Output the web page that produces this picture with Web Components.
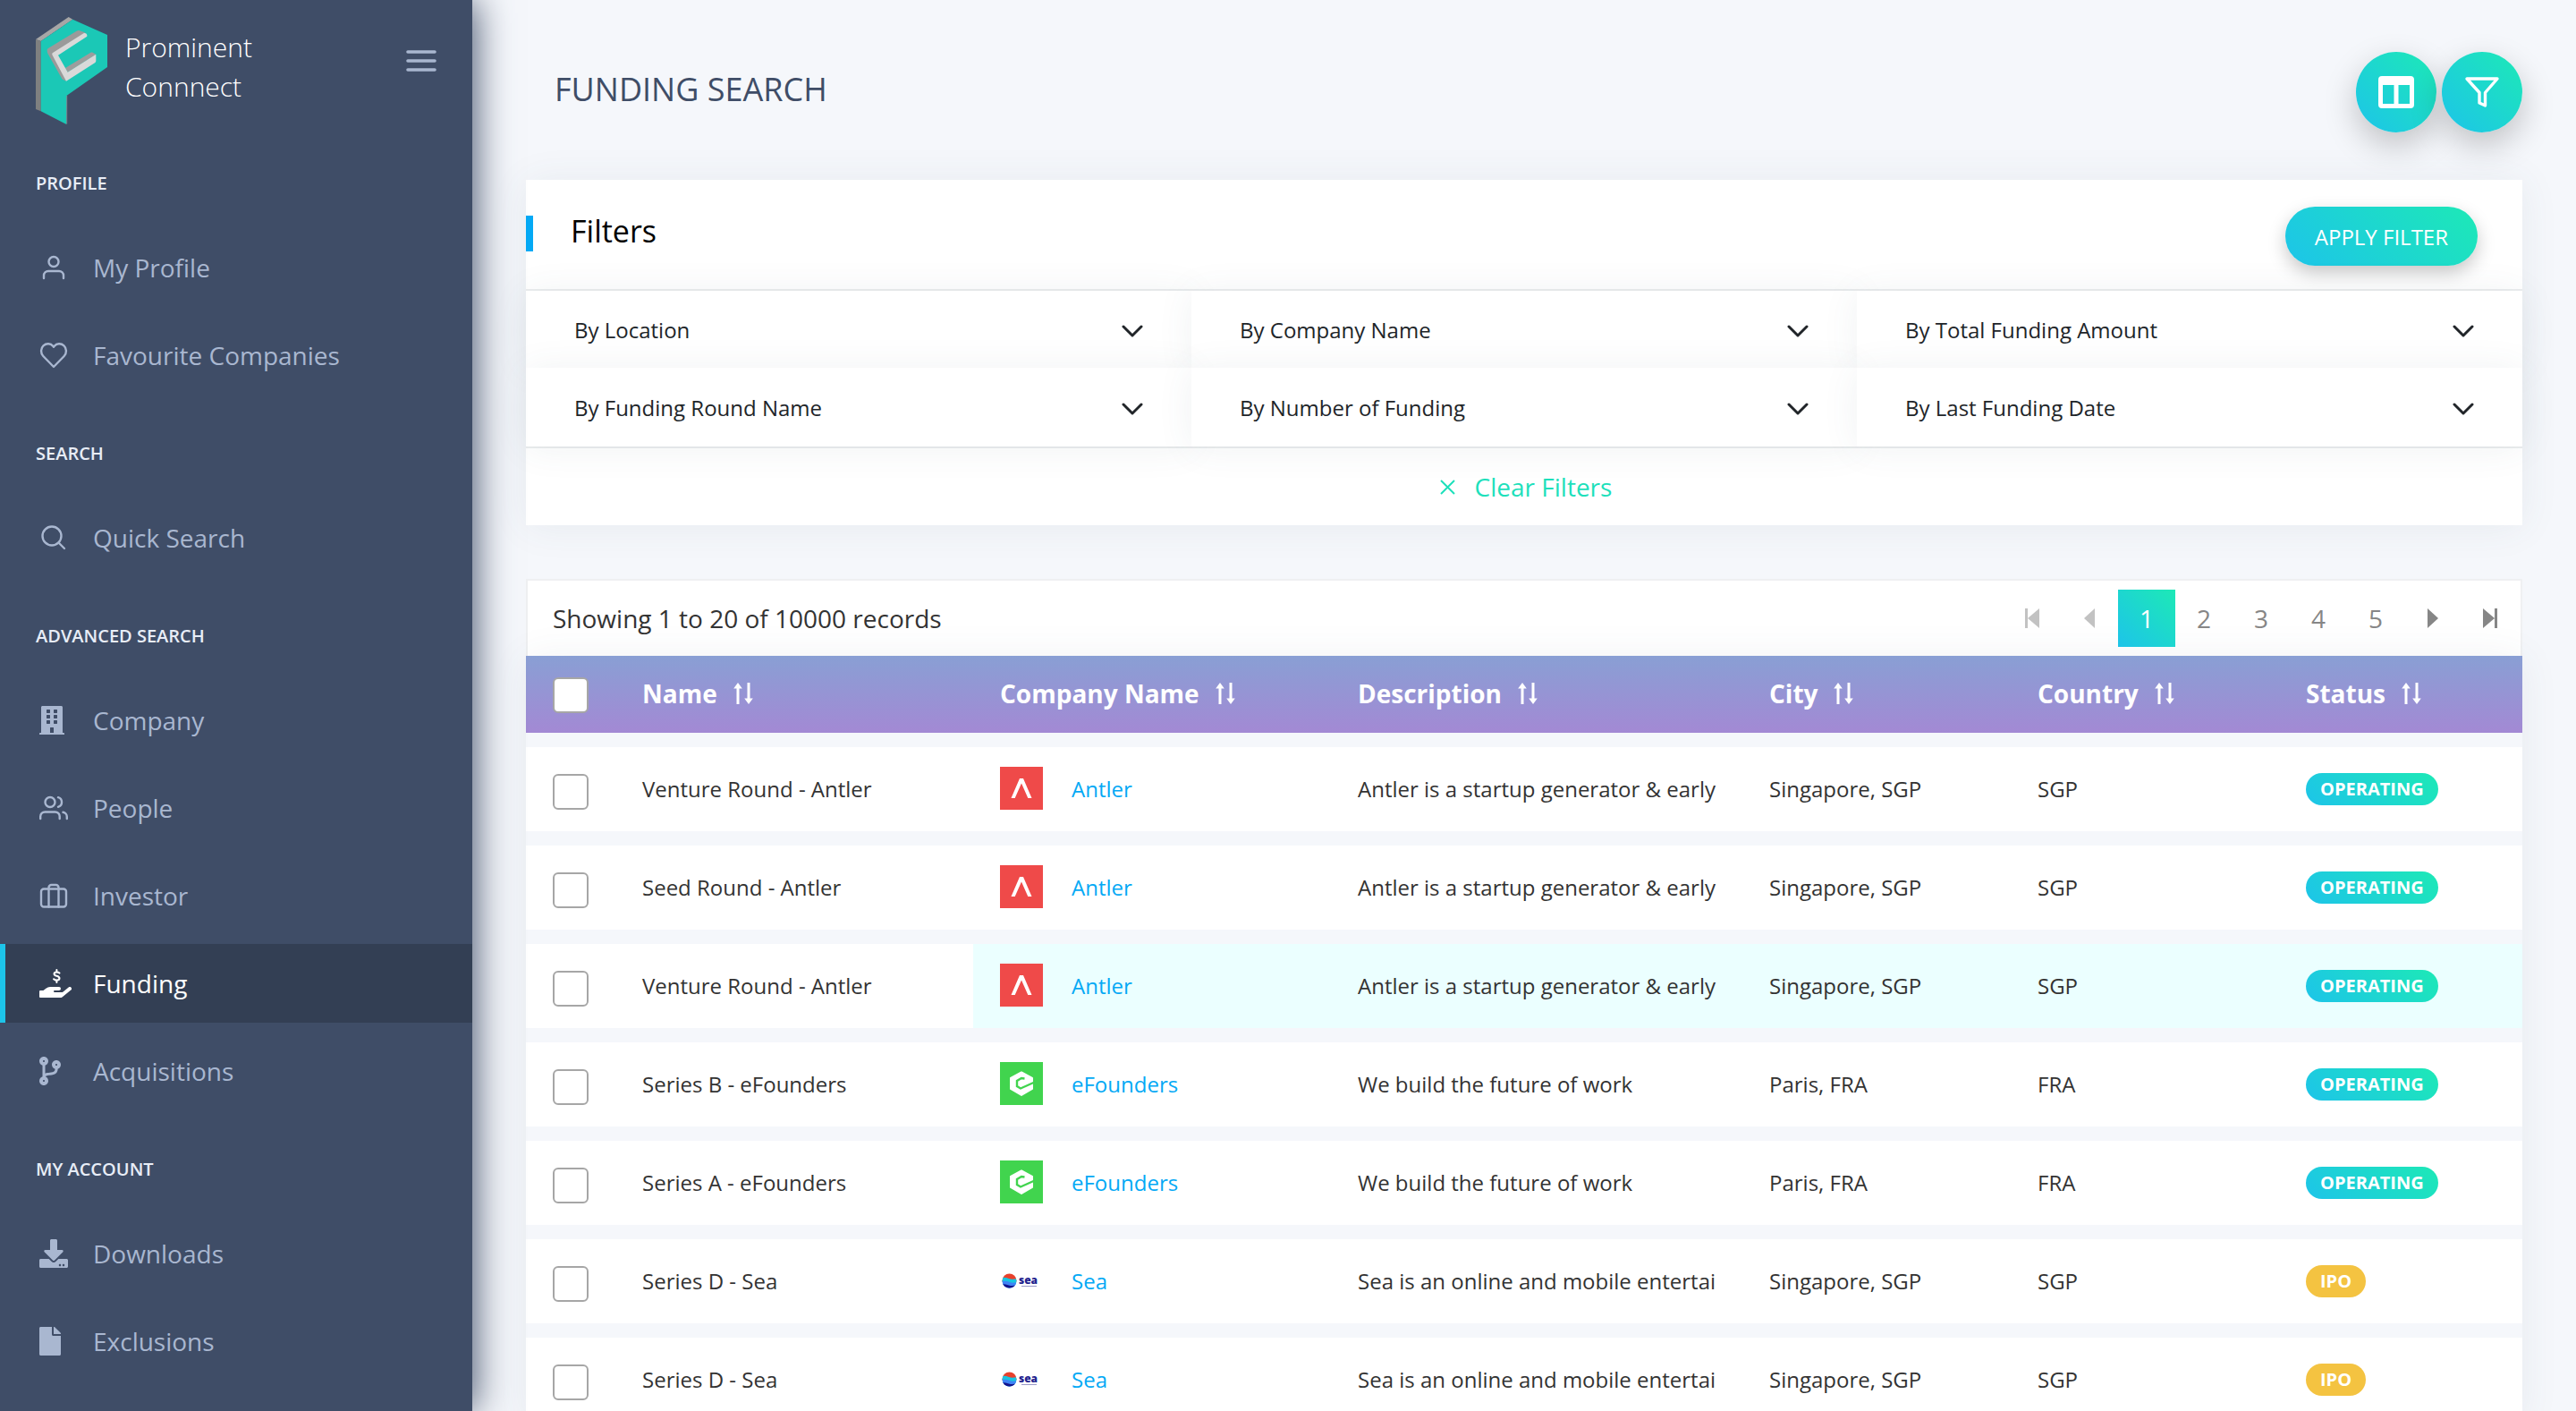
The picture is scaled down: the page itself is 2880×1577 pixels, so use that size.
<!DOCTYPE html>
<html lang="en">
<head>
<meta charset="utf-8">
<title>Prominent Connnect - Funding Search</title>
<style>
  html { font-family: "Open Sans", "Noto Sans", sans-serif; color: #333; --grad: linear-gradient(-135deg, #1de9b6 0%, #1dc4e9 100%); --link: #04a9f5; --page: #f5f7fb; }
  body { margin: 0; background: #f5f7fb; }
</style>
</head>
<body>
<funding-app></funding-app>
<script>
const define = (name, html, setup) => {
  const tpl = document.createElement('template');
  tpl.innerHTML = '<style>*,*::before{box-sizing:border-box}a{text-decoration:none;color:inherit}button{font:inherit;border:0;background:none;padding:0;margin:0;cursor:pointer}svg{display:block}</style>' + html;
  customElements.define(name, class extends HTMLElement {
    constructor() {
      super();
      this.attachShadow({ mode: 'open' }).append(tpl.content.cloneNode(true));
    }
    connectedCallback() { if (setup) setup.call(this, this.shadowRoot); }
  });
};

/* line: stroked outline icons, fill: solid icons */
const ICONS = {
  user: ['0 0 36 32', 'line', '<circle cx="16" cy="9.5" r="5.5"/><path d="M5 28v-3a5 5 0 0 1 5-5h12a5 5 0 0 1 5 5v3"/>'],
  heart: ['0 0 36 32', 'line', '<path d="M16 29 4.3 17C1.2 13.7 1.3 8.4 4.500 5.400 7.700 2.400 12.600 2.600 15.200 5.800L16 6.800l.8-1C19.400 2.600 24.300 2.400 27.500 5.400c3.200 3 3.300 8.300.2 11.600z"/>'],
  search: ['0 0 36 32', 'line', '<circle cx="14" cy="14" r="10.500"/><path d="m21.500 21.500 6.500 6.500"/>'],
  building: ['0 0 36 32', 'fill', '<path fill-rule="evenodd" d="M3.500 0h21c.8 0 1.500.7 1.500 1.500V30h1.300c.4 0 .7.3.7.7V32H0v-1.300c0-.4.3-.7.7-.7H2V1.500C2 .7 2.700 0 3.500 0zM8 4.500v3c0 .3.200.500.500.500h3c.3 0 .5-.2.500-.5v-3c0-.3-.2-.5-.5-.5h-3c-.3 0-.5.2-.5.5zm8 0v3c0 .3.2.500.500.500h3c.3 0 .5-.2.500-.5v-3c0-.3-.2-.5-.5-.5h-3c-.3 0-.5.2-.5.5zm-8 6v3c0 .3.2.500.500.500h3c.3 0 .5-.2.500-.5v-3c0-.3-.2-.5-.5-.5h-3c-.3 0-.5.2-.5.5zm8 0v3c0 .3.200.500.500.500h3c.3 0 .5-.2.500-.5v-3c0-.3-.2-.5-.5-.5h-3c-.3 0-.5.2-.5.5zm-8 6v3c0 .3.200.500.500.500h3c.3 0 .5-.2.500-.5v-3c0-.3-.2-.5-.5-.5h-3c-.3 0-.5.2-.5.5zm8 0v3c0 .3.200.500.500.500h3c.3 0 .5-.2.500-.5v-3c0-.3-.2-.5-.5-.5h-3c-.3 0-.5.2-.5.5zM12 24.500V30h4v-5.500c0-.3-.2-.5-.5-.5h-3c-.3 0-.5.2-.5.500z"/>'],
  users: ['0 0 36 32', 'line', '<circle cx="12" cy="9.500" r="5.500"/><path d="M1.200 28v-2.500a5 5 0 0 1 5-5h11.500a5 5 0 0 1 5 5V28M21 4.200a5.500 5.500 0 0 1 0 10.600M26.500 20.800a5 5 0 0 1 4.300 5V28"/>'],
  suitcase: ['0 0 36 32', 'line', '<rect x="2" y="8.500" width="28" height="20" rx="3"/><path d="M10.500 28.500V7a3 3 0 0 1 3-3h5a3 3 0 0 1 3 3v21.500"/>'],
  funding: ['0 0 576 512', 'fill', '<path d="M565.3 328.1c-11.8-10.7-30.2-10-42.6 0L430.3 402a63.6 63.6 0 0 1-40 14H272a16 16 0 0 1 0-32h78.300c15.900 0 30.700-10.900 33.200-26.600a31 31 0 0 0 .5-5.400A32 32 0 0 0 352 320H192a117.700 117.700 0 0 0-74.100 26.300L71.400 384H16a16 16 0 0 0-16 16v96a16 16 0 0 0 16 16h356.800a64 64 0 0 0 40-14L564 377a32 32 0 0 0 1.300-48.900z"/><path fill="none" stroke="currentColor" stroke-width="34" stroke-linecap="round" d="M359 73c-14-14-30-18-49-18-28 0-45 13-45 33 0 25 25 31 45 36 26 7 49 14 49 41 0 23-19 36-48 36-22 0-38-6-53-20"/><path fill="none" stroke="currentColor" stroke-width="32" stroke-linecap="round" d="M310 16v34m0 156v34"/>'],
  branch: ['0 0 576 512', 'fill', '<path d="M384 144c0-44.200-35.800-80-80-80s-80 35.800-80 80c0 36.400 24.300 67.100 57.500 76.800-.6 16.100-4.200 28.500-11 36.900-15.400 19.200-49.300 22.400-85.200 25.700-28.200 2.600-57.400 5.400-81.300 16.900v-144c32.500-10.200 56-40.500 56-76.300 0-44.200-35.800-80-80-80S0 35.800 0 80c0 35.800 23.500 66.100 56 76.300v199.300C23.500 365.900 0 396.200 0 432c0 44.200 35.800 80 80 80s80-35.800 80-80c0-34-21.200-63.100-51.200-74.600 3.100-5.200 7.800-9.800 14.900-13.400 16.200-8.200 40.400-10.400 66.100-12.800 42.200-3.900 90-8.400 118.200-43.400 14-17.400 21.100-39.800 21.600-67.900 31.600-10.800 54.400-40.700 54.400-75.900zM80 64c8.800 0 16 7.200 16 16s-7.200 16-16 16-16-7.200-16-16 7.200-16 16-16zm0 384c-8.800 0-16-7.200-16-16s7.200-16 16-16 16 7.200 16 16-7.200 16-16 16zm224-320c8.800 0 16 7.200 16 16s-7.200 16-16 16-16-7.200-16-16 7.200-16 16-16z"/>'],
  download: ['0 0 576 512', 'fill', '<path d="M216 0h80c13.300 0 24 10.700 24 24v168h87.700c17.800 0 26.700 21.500 14.100 34.100L269.700 378.300c-7.500 7.500-19.800 7.500-27.300 0L90.100 226.100c-12.600-12.600-3.700-34.100 14.100-34.100H192V24c0-13.300 10.700-24 24-24zm296 376v112c0 13.300-10.700 24-24 24H24c-13.300 0-24-10.700-24-24V376c0-13.300 10.700-24 24-24h146.700l49 49c20.100 20.100 52.500 20.100 72.600 0l49-49H488c13.300 0 24 10.700 24 24zm-124 88c0-11-9-20-20-20s-20 9-20 20 9 20 20 20 20-9 20-20zm64 0c0-11-9-20-20-20s-20 9-20 20 9 20 20 20 20-9 20-20z"/>'],
  file: ['0 0 576 512', 'fill', '<path d="M224 136V0H24C10.700 0 0 10.700 0 24v464c0 13.300 10.700 24 24 24h336c13.300 0 24-10.700 24-24V160H248c-13.200 0-24-10.800-24-24zm160-14.100v6.100H256V0h6.100c6.400 0 12.500 2.500 17 7l97.900 98c4.500 4.500 7 10.600 7 16.900z"/>']
};

define('nav-icon', `<style>:host{display:block;width:36px;height:32px}svg{width:36px;height:32px}.line{fill:none;stroke:currentColor;stroke-width:2.400;stroke-linecap:round;stroke-linejoin:round}.fill{fill:currentColor}</style><span></span>`,
  function (r) {
    const [box, kind, body] = ICONS[this.getAttribute('name')];
    r.querySelector('span').innerHTML = `<svg viewBox="${box}" class="${kind}" aria-hidden="true">${body}</svg>`;
  });

define('brand-logo', `<style>:host{display:block}</style>
<svg width="80" height="120" viewBox="0 0 80 120" aria-hidden="true">
<path fill="#a6a6a6" d="M0 25 36.700 0l4.600 2.700L5.700 27z"/><path fill="#7f8080" d="M0 25l5.700 2v78.300L0 103z"/>
<path fill="#1bc8b6" d="M5.700 27 41.300 2.700 80 20v36L34.700 87.700 34.300 120 5.700 105.300z"/><path fill="none" stroke="#8b8f92" stroke-width=".8" d="M34.700 88v31.500"/>
<path fill="#9a9a9a" d="M12.700 37c0-1 .5-1.700 1.500-2.300L46 15.500c1-.6 2-.7 3-.3l6.500 2.200L20 41l14 30.700-4.500-2.200L13.500 41c-.5-1-.8-2.500-.8-4z"/>
<path fill="#9d9d9d" d="m33 57 28-17c1-.6 2-.5 3-.1l3.300 1.800-31.600 20z"/>
<path fill="#d9d9d9" d="m19 40 34-21.500c2.500-1.400 5 .5 4.300 3.200L25 42.700l10.700 19 31.600-20v7c0 1-.5 2-1.300 2.500L34 71.700 18.500 42.500c-.4-1-.3-2 .5-2.500z"/>
</svg>`);

define('nav-item', `<style>
:host{display:block;margin-bottom:10px;color:#a9b7d0}
a{display:flex;align-items:center;height:88px;padding-left:38px;gap:24px;font-size:28px;border-left:6px solid transparent}
:host([active]){color:#fff}:host([active]) a{background:#333f54;border-left-color:#1dc4e9}
</style><a href="#"><slot></slot></a>`,
  function (r) {
    const link = r.querySelector('a');
    link.insertAdjacentHTML('afterbegin', `<nav-icon name="${this.getAttribute('icon')}"></nav-icon>`);
    if (this.hasAttribute('active')) link.setAttribute('aria-current', 'page');
  });

define('nav-group', `<style>
:host{display:block;margin-bottom:-10px}
h2{margin:0;height:116px;padding:52px 40px 0;font-size:20px;line-height:28px;font-weight:600;color:#e8edf7;text-transform:uppercase}
</style><h2></h2><slot></slot>`,
  function (r) { r.querySelector('h2').textContent = this.getAttribute('label'); });

define('side-bar', `<style>
:host{display:block;background:#3f4d67;box-shadow:2px 0 40px 0 #3f4d67}
header{display:flex;align-items:flex-start;height:139px;padding:19px 38px 0 40px}
.brand{flex:1;display:flex;gap:20px;color:#fff;font-size:30px;line-height:44px;font-weight:300}
.brand span{width:180px;padding-top:12px}
.menu{padding:36px 0 0}
</style>
<header><a class="brand" href="#"><brand-logo></brand-logo><span>Prominent Connnect</span></a>
<button class="menu" aria-label="Toggle menu"><svg width="38" height="28" viewBox="0 0 38 28" fill="none" stroke="#a9b7d0" stroke-width="3.600" stroke-linecap="round"><path d="M4 3h30M4 13h30M4 23h30"/></svg></button></header>
<nav>
<nav-group label="Profile"><nav-item icon="user">My Profile</nav-item><nav-item icon="heart">Favourite Companies</nav-item></nav-group>
<nav-group label="Search"><nav-item icon="search">Quick Search</nav-item></nav-group>
<nav-group label="Advanced Search"><nav-item icon="building">Company</nav-item><nav-item icon="users">People</nav-item><nav-item icon="suitcase">Investor</nav-item><nav-item icon="funding" active>Funding</nav-item><nav-item icon="branch">Acquisitions</nav-item></nav-group>
<nav-group label="My Account"><nav-item icon="download">Downloads</nav-item><nav-item icon="file">Exclusions</nav-item></nav-group>
</nav>`);

define('page-header', `<style>
:host{display:flex;justify-content:space-between;align-items:flex-start;height:201px;padding-top:58px}
h1{margin:0;padding-left:32px;font-size:36px;line-height:84px;font-weight:400;color:#3f4d67;text-transform:uppercase}
div{display:flex;gap:6px}
button{width:90px;height:90px;border-radius:50%;background:var(--grad);box-shadow:0 14px 36px rgba(0,0,0,.22);display:flex;align-items:center;justify-content:center}
</style>
<h1><slot></slot></h1>
<div><button aria-label="Columns"><svg width="40" height="36" viewBox="0 0 40 36" fill="#fff"><path fill-rule="evenodd" d="M4 0h32a4 4 0 0 1 4 4v28a4 4 0 0 1-4 4H4a4 4 0 0 1-4-4V4a4 4 0 0 1 4-4zm1 10v21h12.500V10zm17.500 0v21H35V10z"/></svg></button>
<button aria-label="Filter"><svg width="40" height="36" viewBox="0 0 40 36" fill="none" stroke="#fff" stroke-width="3.400" stroke-linejoin="round"><path d="M3 3h34L23.500 18.500V33l-6.500-3V18.500z"/></svg></button></div>`);

define('filter-item', `<style>
:host{display:block;background:#fff;box-shadow:0 2px 40px 0 rgba(69,90,100,.08)}
button{display:flex;align-items:center;justify-content:space-between;width:100%;height:100%;padding:0 54px;font-size:24px;color:#212529;text-align:left}
svg{margin-top:4px}
</style><button aria-expanded="false"><slot></slot><svg width="24" height="14" viewBox="0 0 24 14" fill="none" stroke="currentColor" stroke-width="3" stroke-linecap="round" stroke-linejoin="round"><path d="M2 2l10 10L22 2"/></svg></button>`);

define('filter-panel', `<style>
:host{display:block;background:#fff;box-shadow:0 2px 40px 0 rgba(69,90,100,.08);margin-bottom:60px}
header{display:flex;align-items:flex-start;height:122px;padding:30px 50px 0 0}
header::before{content:"";width:8px;height:40px;margin-top:10px;background:var(--link)}
h2{flex:1;margin:0;padding-left:42px;font-size:34px;line-height:54px;font-weight:400;color:#000}
.apply{height:66px;padding:0 33px;border-radius:33px;background:var(--grad);color:#fff;font-size:24px;box-shadow:0 8px 20px rgba(0,0,0,.22)}
.grid{display:grid;grid-template:86px 88px / repeat(3,1fr);border:solid #ebedee;border-width:2px 0}
footer{height:86px;display:flex;justify-content:center;align-items:center;padding-left:4px}
.clear{display:flex;align-items:center;gap:22px;font-size:28px;color:#1de0bb}
</style>
<header><h2>Filters</h2><button class="apply">APPLY FILTER</button></header>
<div class="grid"><filter-item>By Location</filter-item><filter-item>By Company Name</filter-item><filter-item>By Total Funding Amount</filter-item><filter-item>By Funding Round Name</filter-item><filter-item>By Number of Funding</filter-item><filter-item>By Last Funding Date</filter-item></div>
<footer><button class="clear"><svg width="17" height="17" viewBox="0 0 17 17" fill="none" stroke="currentColor" stroke-width="2"><path d="M1 1l15 15M16 1 1 16"/></svg>Clear Filters</button></footer>`);

define('page-nav', `<style>
:host{display:flex;align-items:center;justify-content:space-between;height:86px;padding:0 2px 0 28px;background:#fff;border:2px solid #eff0f2;border-bottom:0;font-size:28px}
nav{display:flex}
button{width:64px;height:64px;display:flex;align-items:center;justify-content:center;color:#868686}
button[aria-current]{background:var(--grad);color:#fff}
button:disabled{color:#c2c2c2}
svg{fill:currentColor}
</style>
<span>Showing 1 to 20 of 10000 records</span>
<nav aria-label="Pages">
<button disabled aria-label="First page"><svg width="16" height="22" viewBox="0 0 16 22"><path d="M0 0h3v22H0zM16 0v22L3 11z"/></svg></button>
<button disabled aria-label="Previous page"><svg width="12" height="22" viewBox="0 0 12 22"><path d="M12 0v22L0 11z"/></svg></button>
<button aria-current="page">1</button><button>2</button><button>3</button><button>4</button><button>5</button>
<button aria-label="Next page"><svg width="12" height="22" viewBox="0 0 12 22"><path d="M0 0v22l12-11z"/></svg></button>
<button aria-label="Last page"><svg width="16" height="22" viewBox="0 0 16 22"><path d="M0 0v22l13-11zM13 0h3v22h-3z"/></svg></button>
</nav>`);

const LOGOS = {
  Antler: '<rect width="48" height="48" fill="#ef4a49"/><path fill="#fff" d="M12.500 35 22 13h4l9.500 22H31.300L24 18.500 16.700 35z"/>',
  eFounders: '<rect width="48" height="48" fill="#41d44e"/><path fill="#fff" stroke="#fff" stroke-width="2" stroke-linejoin="round" d="M24 11.500 36 18v4.500L24 29v0l12-4.500V30l-12 7-12-7V18z"/><path fill="none" stroke="#41d44e" stroke-width="2.400" d="M27.500 18.500 24 18l-5 3v6l4 2.500L37.500 23"/>',
  Sea: '<clipPath id="c"><circle cx="10.500" cy="24.500" r="8"/></clipPath><g clip-path="url(#c)"><path fill="#e8412c" d="M0 14h22v12H0z"/><path fill="#1ac4e0" d="M0 21q6-1 10 1t12-1v12H0z"/><path fill="#3f83f5" d="M0 25q7-1 11 1t11-1v10H0z"/><path fill="#14148c" d="M0 28q6 0 10 1.500T22 28.500V36H0z"/></g><text x="21" y="28" font-family="Open Sans" font-weight="800" font-size="12" fill="#23238e">sea</text><path stroke="#9a9ac8" stroke-width="1" d="M24 30.500h17"/>'
};
define('company-link', `<style>
:host{display:flex;align-items:center;gap:32px;color:var(--link);font-size:24px}
</style><svg width="48" height="48" viewBox="0 0 48 48" aria-hidden="true"></svg><a href="#"></a>`,
  function (r) {
    const n = this.getAttribute('name');
    r.querySelector('svg').innerHTML = LOGOS[n];
    r.querySelector('a').textContent = n;
  });

define('status-badge', `<style>
:host{display:inline-flex;align-items:center;height:36px;padding:0 16px;border-radius:18px;background:var(--grad);color:#fff;font-size:20px;font-weight:700;vertical-align:middle}
:host([kind="ipo"]){background:#f4c341}
</style><slot></slot>`);

const ROWS = [
  ['Venture Round - Antler', 'Antler', 'Antler is a startup generator & early', 'Singapore, SGP', 'SGP', 'OPERATING'],
  ['Seed Round - Antler', 'Antler', 'Antler is a startup generator & early', 'Singapore, SGP', 'SGP', 'OPERATING'],
  ['Venture Round - Antler', 'Antler', 'Antler is a startup generator & early', 'Singapore, SGP', 'SGP', 'OPERATING', true],
  ['Series B - eFounders', 'eFounders', 'We build the future of work', 'Paris, FRA', 'FRA', 'OPERATING'],
  ['Series A - eFounders', 'eFounders', 'We build the future of work', 'Paris, FRA', 'FRA', 'OPERATING'],
  ['Series D - Sea', 'Sea', 'Sea is an online and mobile entertai', 'Singapore, SGP', 'SGP', 'IPO'],
  ['Series D - Sea', 'Sea', 'Sea is an online and mobile entertai', 'Singapore, SGP', 'SGP', 'IPO']
];
define('funding-table', `<style>
:host{display:block;box-shadow:0 2px 40px 0 rgba(69,90,100,.08)}
table{width:100%;table-layout:fixed;border-collapse:separate;border-spacing:0}
thead tr{background:linear-gradient(180deg,#899fd4,#a389d4)}
th{height:86px;padding:0 30px 2px;text-align:left;color:#fff;font-size:28px;font-weight:700;white-space:nowrap}
th button{display:flex;align-items:center;gap:18px;color:inherit}
td{height:110px;padding:0 30px 2px;border-top:16px solid var(--page);background:#fff;font-size:24px;color:#333;white-space:nowrap}
tr.hover td:nth-child(n+3){background:#ebffff}
td:nth-child(4){padding-right:0}
input{appearance:none;display:block;width:40px;height:40px;margin:8px 0 0;background:#fff;border:2px solid #a6a6a6;border-radius:6px}
th input{margin-top:4px}
</style>
<table><colgroup><col style="width:100px"><col style="width:400px"><col style="width:400px"><col style="width:460px"><col style="width:300px"><col style="width:300px"><col></colgroup>
<thead><tr><th><input type="checkbox" aria-label="Select all"></th></tr></thead><tbody></tbody></table>`,
  function (r) {
    const head = r.querySelector('thead tr'), body = r.querySelector('tbody');
    for (const t of ['Name', 'Company Name', 'Description', 'City', 'Country', 'Status'])
      head.insertAdjacentHTML('beforeend', `<th scope="col"><button>${t}<svg width="22" height="24" viewBox="0 0 22 24" fill="currentColor" aria-hidden="true"><path d="M5 0l4.800 6.500H6.500V24h-3V6.500H.2zM17 24l-4.800-6.500h3.300V0h3v17.500h3.300z"/></svg></button></th>`);
    for (const [name, co, desc, city, country, status, hover] of ROWS)
      body.insertAdjacentHTML('beforeend', `<tr class="${hover ? 'hover' : ''}"><td><input type="checkbox" aria-label="Select ${name}"></td><td>${name}</td><td><company-link name="${co}"></company-link></td><td>${desc.replace('&', '&amp;')}</td><td>${city}</td><td>${country}</td><td><status-badge kind="${status.toLowerCase()}">${status}</status-badge></td></tr>`);
  });

define('funding-app', `<style>
:host{display:flex;height:100vh;overflow:hidden}
side-bar{flex:0 0 528px;position:relative;z-index:1}
main{flex:1;min-width:0;padding:0 60px}
</style>
<side-bar></side-bar>
<main><page-header>Funding Search</page-header><filter-panel></filter-panel><section><page-nav></page-nav><funding-table></funding-table></section></main>`);
</script>
</body>
</html>
